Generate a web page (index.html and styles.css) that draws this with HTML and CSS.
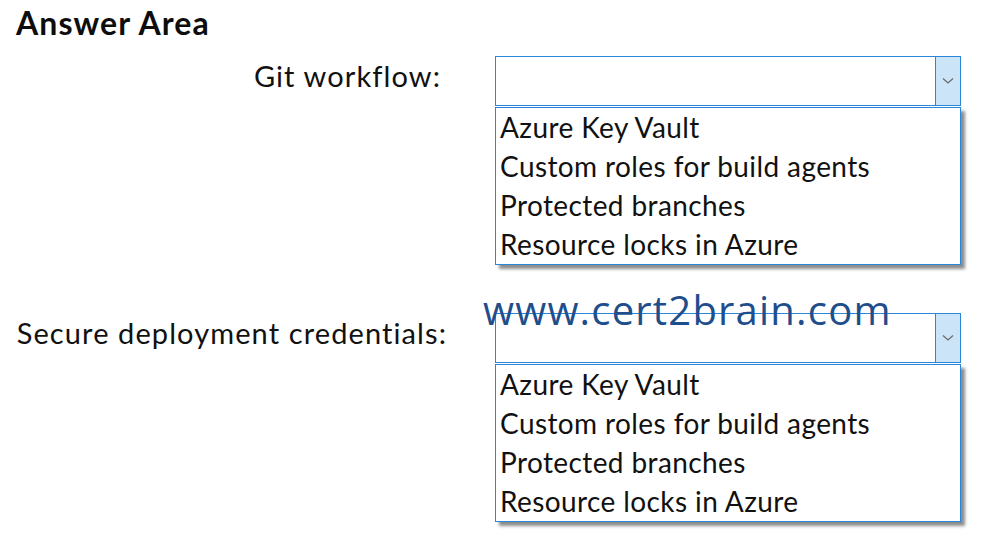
FILE: index.html
```html
<!DOCTYPE html>
<html>
<head>
<meta charset="utf-8">
<link rel="stylesheet" href="styles.css">
</head>
<body>
<div class="page">
  <h1 class="title">Answer Area</h1>
  <div class="row">
    <div class="label label-git">Git workflow:</div>
    <div class="dropdown">
      <div class="select">
        <div class="select-value"></div>
        <div class="select-arrow"><svg width="12" height="8" viewBox="0 0 12 8"><path d="M1 1.5 L6 6 L11 1.5" fill="none" stroke="#6b6b6b" stroke-width="1.3"/></svg></div>
      </div>
      <ul class="options">
        <li>Azure Key Vault</li>
        <li>Custom roles for build agents</li>
        <li>Protected branches</li>
        <li>Resource locks in Azure</li>
      </ul>
    </div>
  </div>
  <div class="row row-second">
    <div class="label">Secure deployment credentials:</div>
    <div class="dropdown">
      <div class="select">
        <div class="select-value"></div>
        <div class="select-arrow"><svg width="12" height="8" viewBox="0 0 12 8"><path d="M1 1.5 L6 6 L11 1.5" fill="none" stroke="#6b6b6b" stroke-width="1.3"/></svg></div>
      </div>
      <ul class="options">
        <li>Azure Key Vault</li>
        <li>Custom roles for build agents</li>
        <li>Protected branches</li>
        <li>Resource locks in Azure</li>
      </ul>
    </div>
  </div>
  <div class="watermark">www.cert2brain.com</div>
</div>
</body>
</html>
```
FILE: styles.css
```css
html, body {
  margin: 0;
  padding: 0;
  background: #ffffff;
}
.page {
  position: relative;
  width: 984px;
  height: 541px;
  font-family: Lato, "Open Sans", sans-serif;
  color: #111111;
}
.title {
  margin: 7px 0 0 16px;
  font-size: 32px;
  line-height: 32px;
  font-weight: 700;
  letter-spacing: 1.1px;
  color: #0d0d0d;
}
.row {
  display: flex;
  align-items: flex-start;
  margin-top: 17px;
}
.row-second {
  margin-top: 48px;
}
.label {
  width: 447px;
  text-align: right;
  font-size: 29px;
  line-height: 28px;
  letter-spacing: 1.1px;
  padding-top: 6px;
  box-sizing: border-box;
}
.label-git {
  padding-right: 6px;
}
.dropdown {
  margin-left: 48px;
  width: 466px;
}
.select {
  display: flex;
  height: 50px;
  border: 1px solid #2a86d9;
  box-sizing: border-box;
  background: #fff;
}
.select-value {
  flex: 1;
}
.select-arrow {
  width: 24px;
  border-left: 1px solid #2a86d9;
  background: #cce4f7;
  display: flex;
  align-items: center;
  justify-content: center;
}
.options {
  list-style: none;
  margin: 1px 0 0 0;
  padding: 0;
  border: 1px solid #2a86d9;
  background: #fff;
  box-shadow: 4px 4px 3px rgba(0, 0, 0, 0.45);
}
.options li {
  height: 39px;
  line-height: 39px;
  padding-left: 4px;
  font-size: 28px;
  letter-spacing: 0.4px;
  color: #111;
  white-space: nowrap;
}
.watermark {
  position: absolute;
  left: 483px;
  top: 279px;
  font-family: "Open Sans", Lato, sans-serif;
  font-size: 40px;
  line-height: 48px;
  letter-spacing: 1.2px;
  color: #1f4e8c;
  white-space: nowrap;
}
```
